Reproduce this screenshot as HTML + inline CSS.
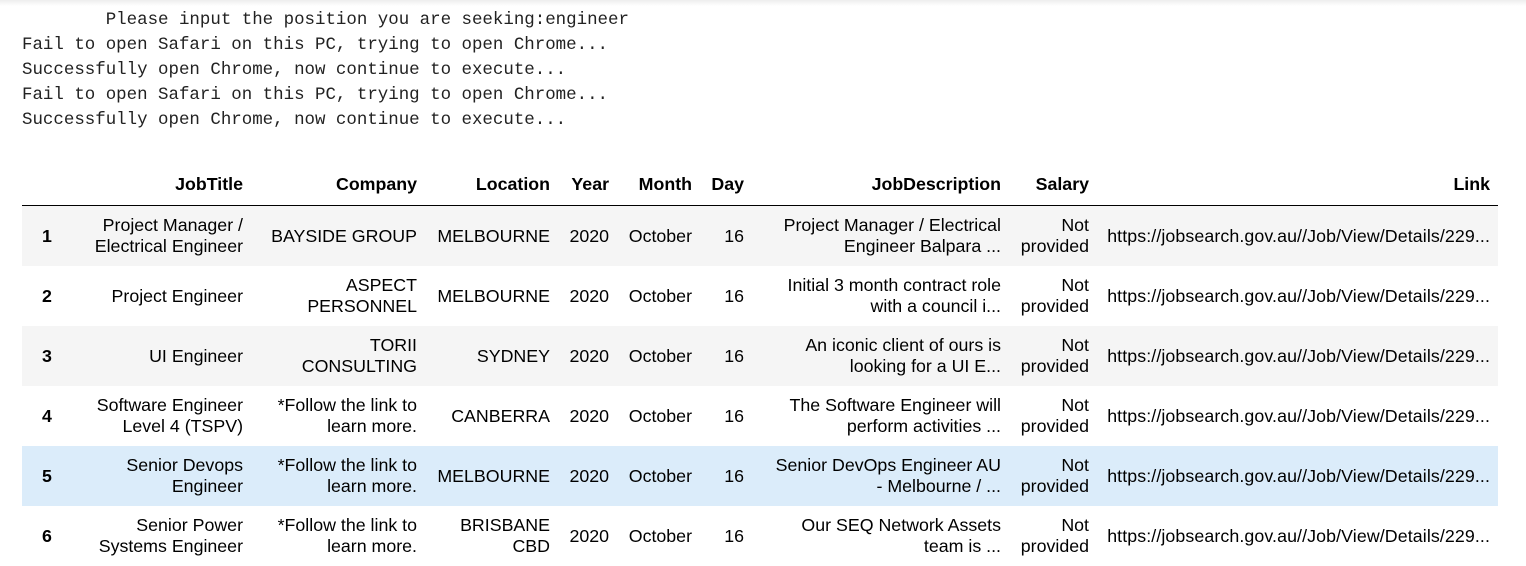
<!DOCTYPE html>
<html><head><style>
body{margin:0;width:1526px;height:529px;overflow:hidden;background:#fff;position:relative}
.top{position:absolute;left:0;top:0;width:1526px;height:6px;background:linear-gradient(#eee,#fff)}
pre{position:absolute;left:22px;top:8px;margin:0;font-family:"Liberation Mono",monospace;font-size:17.45px;line-height:25px;color:#222}
table{position:absolute;left:22px;top:164px;border-collapse:collapse;table-layout:fixed;font-family:"Liberation Sans",Arial,sans-serif;font-size:17.8px;line-height:21px;color:#000}
td,th{padding:0 8px;text-align:right;vertical-align:middle;white-space:nowrap;overflow:visible}
th{font-weight:bold;height:41px;border-bottom:1px solid #000}
td{height:60px}
td.i{text-align:left;padding-left:20px;font-weight:bold}
td.l{letter-spacing:0.1px}
tr.o td{background:#f5f5f5}
tr.h td{background:#dbecfa}
</style></head><body>
<div class="top"></div>
<pre>        Please input the position you are seeking:engineer
Fail to open Safari on this PC, trying to open Chrome...
Successfully open Chrome, now continue to execute...
Fail to open Safari on this PC, trying to open Chrome...
Successfully open Chrome, now continue to execute...</pre>
<table>
<colgroup><col style="width:58px"><col style="width:171px"><col style="width:174px"><col style="width:133px"><col style="width:59px"><col style="width:83px"><col style="width:52px"><col style="width:257px"><col style="width:88px"><col style="width:401px"></colgroup>
<tr><th></th><th>JobTitle</th><th>Company</th><th>Location</th><th>Year</th><th>Month</th><th>Day</th><th>JobDescription</th><th>Salary</th><th>Link</th></tr>
<tr class="o"><td class="i">1</td><td>Project Manager /<br>Electrical Engineer</td><td>BAYSIDE GROUP</td><td>MELBOURNE</td><td>2020</td><td>October</td><td>16</td><td>Project Manager / Electrical<br>Engineer Balpara ...</td><td>Not<br>provided</td><td class="l">https://jobsearch.gov.au//Job/View/Details/229...</td></tr>
<tr><td class="i">2</td><td>Project Engineer</td><td>ASPECT<br>PERSONNEL</td><td>MELBOURNE</td><td>2020</td><td>October</td><td>16</td><td>Initial 3 month contract role<br>with a council i...</td><td>Not<br>provided</td><td class="l">https://jobsearch.gov.au//Job/View/Details/229...</td></tr>
<tr class="o"><td class="i">3</td><td>UI Engineer</td><td>TORII<br>CONSULTING</td><td>SYDNEY</td><td>2020</td><td>October</td><td>16</td><td>An iconic client of ours is<br>looking for a UI E...</td><td>Not<br>provided</td><td class="l">https://jobsearch.gov.au//Job/View/Details/229...</td></tr>
<tr><td class="i">4</td><td>Software Engineer<br>Level 4 (TSPV)</td><td>*Follow the link to<br>learn more.</td><td>CANBERRA</td><td>2020</td><td>October</td><td>16</td><td>The Software Engineer will<br>perform activities ...</td><td>Not<br>provided</td><td class="l">https://jobsearch.gov.au//Job/View/Details/229...</td></tr>
<tr class="h"><td class="i">5</td><td>Senior Devops<br>Engineer</td><td>*Follow the link to<br>learn more.</td><td>MELBOURNE</td><td>2020</td><td>October</td><td>16</td><td>Senior DevOps Engineer AU<br>- Melbourne / ...</td><td>Not<br>provided</td><td class="l">https://jobsearch.gov.au//Job/View/Details/229...</td></tr>
<tr><td class="i">6</td><td>Senior Power<br>Systems Engineer</td><td>*Follow the link to<br>learn more.</td><td>BRISBANE<br>CBD</td><td>2020</td><td>October</td><td>16</td><td>Our SEQ Network Assets<br>team is ...</td><td>Not<br>provided</td><td class="l">https://jobsearch.gov.au//Job/View/Details/229...</td></tr>
</table>
</body></html>
